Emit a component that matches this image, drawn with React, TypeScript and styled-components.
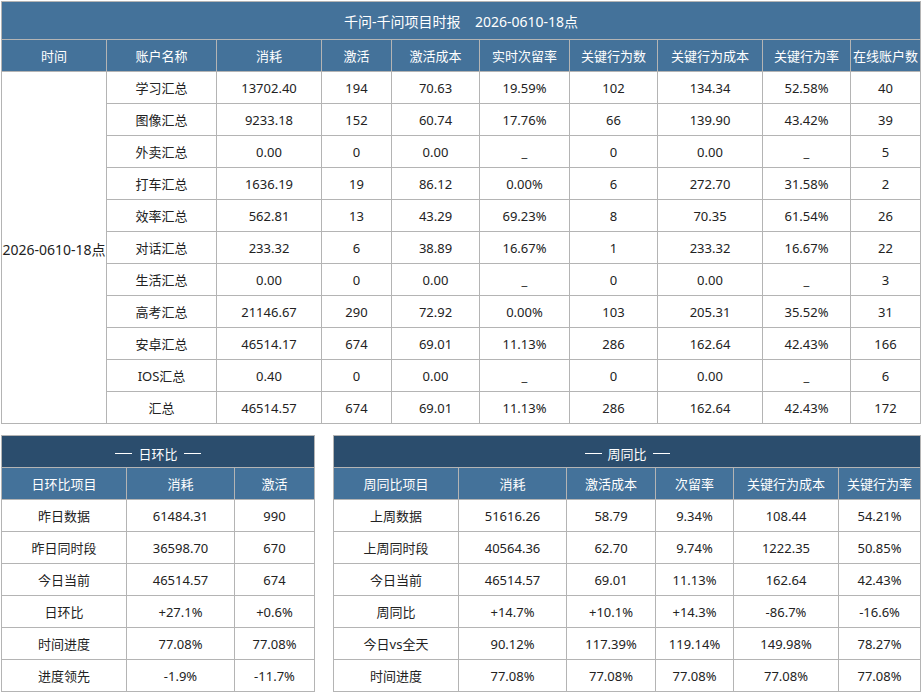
import React from "react";
import styled, { createGlobalStyle } from "styled-components";

const GlobalStyle = createGlobalStyle`
  html, body {
    margin: 0;
    padding: 0;
    background: #ffffff;
  }
  body {
    font-family: "Noto Sans", "Noto Sans CJK SC", sans-serif;
    font-size: 13px;
    color: #222222;
  }
`;

const Page = styled.div`
  width: 923px;
  padding: 1px 0 0 1px;
  box-sizing: border-box;
  display: flex;
  flex-direction: column;
  gap: 11px;
`;

const BottomRow = styled.div`
  display: flex;
  align-items: flex-start;
  gap: 18px;
`;

const Table = styled.table<{ $width: number }>`
  width: ${(p) => p.$width}px;
  border-collapse: collapse;
  table-layout: fixed;
  font-size: 13px;
`;

const TitleCell = styled.th<{ $dark?: boolean; $height: number; $size: number }>`
  height: ${(p) => p.$height}px;
  padding: 0;
  background: ${(p) => (p.$dark ? "#2b4d6d" : "#44729a")};
  color: #ffffff;
  font-size: ${(p) => p.$size}px;
  font-weight: normal;
  text-align: center;
  white-space: pre;
  border: 1px solid #b4b4b4;
`;

const TitleInner = styled.span`
  display: inline-flex;
  align-items: center;
  gap: 6px;
`;

const Dash = styled.span`
  display: inline-block;
  width: 17px;
  height: 1px;
  background: #ffffff;
`;

const HeadCell = styled.th`
  height: 31px;
  padding: 0;
  background: #44729a;
  color: #ffffff;
  font-weight: normal;
  text-align: center;
  white-space: nowrap;
  border: 1px solid #b4b4b4;
`;

const Cell = styled.td`
  height: 31px;
  padding: 0;
  text-align: center;
  white-space: nowrap;
  border: 1px solid #b4b4b4;
  color: #222222;
`;

const TimeCell = styled(Cell)`
  overflow: visible;
  font-size: 14px;
  padding-top: 2px;
`;

const mainCols = [105, 110, 105, 70, 88, 90, 88, 105, 88, 70];
const mainHead = [
  "时间",
  "账户名称",
  "消耗",
  "激活",
  "激活成本",
  "实时次留率",
  "关键行为数",
  "关键行为成本",
  "关键行为率",
  "在线账户数",
];
const mainRows: string[][] = [
  ["学习汇总", "13702.40", "194", "70.63", "19.59%", "102", "134.34", "52.58%", "40"],
  ["图像汇总", "9233.18", "152", "60.74", "17.76%", "66", "139.90", "43.42%", "39"],
  ["外卖汇总", "0.00", "0", "0.00", "_", "0", "0.00", "_", "5"],
  ["打车汇总", "1636.19", "19", "86.12", "0.00%", "6", "272.70", "31.58%", "2"],
  ["效率汇总", "562.81", "13", "43.29", "69.23%", "8", "70.35", "61.54%", "26"],
  ["对话汇总", "233.32", "6", "38.89", "16.67%", "1", "233.32", "16.67%", "22"],
  ["生活汇总", "0.00", "0", "0.00", "_", "0", "0.00", "_", "3"],
  ["高考汇总", "21146.67", "290", "72.92", "0.00%", "103", "205.31", "35.52%", "31"],
  ["安卓汇总", "46514.17", "674", "69.01", "11.13%", "286", "162.64", "42.43%", "166"],
  ["IOS汇总", "0.40", "0", "0.00", "_", "0", "0.00", "_", "6"],
  ["汇总", "46514.57", "674", "69.01", "11.13%", "286", "162.64", "42.43%", "172"],
];

const dayCols = [125, 108, 80];
const dayHead = ["日环比项目", "消耗", "激活"];
const dayRows: string[][] = [
  ["昨日数据", "61484.31", "990"],
  ["昨日同时段", "36598.70", "670"],
  ["今日当前", "46514.57", "674"],
  ["日环比", "+27.1%", "+0.6%"],
  ["时间进度", "77.08%", "77.08%"],
  ["进度领先", "-1.9%", "-11.7%"],
];

const weekCols = [125, 108, 89, 78, 105, 82];
const weekHead = ["周同比项目", "消耗", "激活成本", "次留率", "关键行为成本", "关键行为率"];
const weekRows: string[][] = [
  ["上周数据", "51616.26", "58.79", "9.34%", "108.44", "54.21%"],
  ["上周同时段", "40564.36", "62.70", "9.74%", "1222.35", "50.85%"],
  ["今日当前", "46514.57", "69.01", "11.13%", "162.64", "42.43%"],
  ["周同比", "+14.7%", "+10.1%", "+14.3%", "-86.7%", "-16.6%"],
  ["今日vs全天", "90.12%", "117.39%", "119.14%", "149.98%", "78.27%"],
  ["时间进度", "77.08%", "77.08%", "77.08%", "77.08%", "77.08%"],
];

const sum = (a: number[]) => a.reduce((s, v) => s + v, 0);

const Colgroup = ({ cols }: { cols: number[] }) => (
  <colgroup>
    {cols.map((w, i) => (
      <col key={i} style={{ width: w }} />
    ))}
  </colgroup>
);

const SummaryTable = (props: {
  title: string;
  cols: number[];
  head: string[];
  rows: string[][];
}) => (
  <Table $width={sum(props.cols)}>
    <Colgroup cols={props.cols} />
    <thead>
      <tr>
        <TitleCell $dark $height={31} $size={13} colSpan={props.cols.length}>
          <TitleInner>
            <Dash />
            {props.title}
            <Dash />
          </TitleInner>
        </TitleCell>
      </tr>
      <tr>
        {props.head.map((h) => (
          <HeadCell key={h}>{h}</HeadCell>
        ))}
      </tr>
    </thead>
    <tbody>
      {props.rows.map((r, i) => (
        <tr key={i}>
          {r.map((v, j) => (
            <Cell key={j}>{v}</Cell>
          ))}
        </tr>
      ))}
    </tbody>
  </Table>
);

export default function App() {
  return (
    <>
      <GlobalStyle />
      <Page>
        <Table $width={sum(mainCols)}>
          <Colgroup cols={mainCols} />
          <thead>
            <tr>
              <TitleCell $height={37} $size={14} colSpan={mainCols.length}>
                {"千问-千问项目时报    2026-0610-18点"}
              </TitleCell>
            </tr>
            <tr>
              {mainHead.map((h) => (
                <HeadCell key={h}>{h}</HeadCell>
              ))}
            </tr>
          </thead>
          <tbody>
            {mainRows.map((r, i) => (
              <tr key={i}>
                {i === 0 && (
                  <TimeCell rowSpan={mainRows.length}>2026-0610-18点</TimeCell>
                )}
                {r.map((v, j) => (
                  <Cell key={j}>{v}</Cell>
                ))}
              </tr>
            ))}
          </tbody>
        </Table>
        <BottomRow>
          <SummaryTable title="日环比" cols={dayCols} head={dayHead} rows={dayRows} />
          <SummaryTable title="周同比" cols={weekCols} head={weekHead} rows={weekRows} />
        </BottomRow>
      </Page>
    </>
  );
}
